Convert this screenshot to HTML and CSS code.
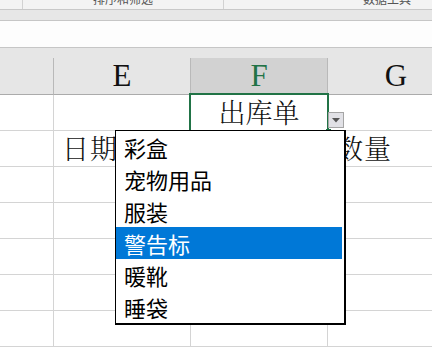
FILE: index.html
```html
<!DOCTYPE html>
<html lang="zh-CN">
<head>
    <meta charset="UTF-8">
    <meta name="viewport" content="width=device-width, initial-scale=1.0">
    <title>出库单</title>
<link rel="stylesheet" href="styles.css">
</head>
<body>
    <div class="ribbon">
        <div class="gruppe g1"><span>排序和筛选</span></div>
        <div class="gruppe g2"><span>数据工具</span></div>
    </div>
    <div class="faneband"></div>
    <div class="formel"></div>

    <section class="ark">
        <div class="topband"></div>
        <div class="gitter">
            <div class="hoved"></div>
            <div class="hoved">E</div>
            <div class="hoved valgt">F</div>
            <div class="hoved">G</div>

            <div class="celle"></div>
            <div class="celle"></div>
            <div class="celle midt">出库单</div>
            <div class="celle"></div>

            <div class="celle"></div>
            <div class="celle venstre">日期</div>
            <div class="celle"></div>
            <div class="celle venstre">数量</div>

            <div class="celle"></div><div class="celle"></div><div class="celle"></div><div class="celle"></div>
            <div class="celle"></div><div class="celle"></div><div class="celle"></div><div class="celle"></div>
            <div class="celle"></div><div class="celle"></div><div class="celle"></div><div class="celle"></div>
            <div class="celle"></div><div class="celle"></div><div class="celle"></div><div class="celle"></div>
            <div class="celle"></div><div class="celle"></div><div class="celle"></div><div class="celle"></div>
        </div>

        <!-- markering af F1 -->
        <div class="markering"><span class="haandtag"></span></div>

        <div class="pil">
            <svg width="8" height="5" viewBox="0 0 8 5"><path d="M0 0 L8 0 L4 4.5 Z" fill="#555"/></svg>
        </div>

        <ul class="liste">
            <li>彩盒</li>
            <li>宠物用品</li>
            <li>服装</li>
            <li class="aktiv">警告标</li>
            <li>暖靴</li>
            <li>睡袋</li>
        </ul>
    </section>
</body>
</html>
```

FILE: styles.css
```css
html {
    overflow: hidden;
}

body {
    margin: 0;
    width: 432px;
    height: 360px;
    overflow: hidden;
    background: #ffffff;
    font-family: "Liberation Sans", "Noto Sans CJK SC", sans-serif;
}

/* ribbon */
.ribbon {
    height: 9px;
    background: #f3f3f3;
    border-bottom: 1px solid #c8c8c8;
    position: relative;
    overflow: hidden;
}

.gruppe {
    position: absolute;
    top: 0;
    height: 9px;
    border-left: 1px solid #d2d2d2;
}
.g1 { left: 22px; width: 200px; }
.g2 { left: 223px; width: 208px; }

.gruppe span {
    position: absolute;
    top: -9px;
    font-family: "Noto Sans CJK SC", sans-serif;
    font-size: 12px;
    line-height: 16px;
    color: #555;
}
.g1 span { left: 70px; }
.g2 span { left: 139px; }

.faneband {
    height: 10px;
    background: #e7e7e7;
    border-bottom: 1px solid #c6c6c6;
}

.formel {
    height: 26px;
    background: #fdfdfd;
    border-bottom: 1px solid #c6c6c6;
}

/* regneark */
.ark {
    position: relative;
    height: 312px;
    overflow: hidden;
}

.topband {
    height: 10px;
    background: #e6e6e6;
}

.gitter {
    display: grid;
    grid-template-columns: 54px 137px 137px 137px;
    grid-auto-rows: 36px;
    grid-template-rows: 37px;
    width: 465px;
}

.hoved {
    background: #e6e6e6;
    border-right: 1px solid #b9b9b9;
    border-bottom: 1px solid #ababab;
    font-family: "Liberation Serif", serif;
    font-size: 31px;
    line-height: 36px;
    text-align: center;
    color: #111;
}
.hoved.valgt {
    background: #d2d2d2;
    color: #217346;
}

.celle {
    border-right: 1px solid #d4d4d4;
    border-bottom: 1px solid #d4d4d4;
    font-family: "Noto Serif CJK SC", "Noto Sans CJK SC", serif;
    font-size: 27px;
    font-weight: 300;
    line-height: 34px;
    color: #111;
    white-space: nowrap;
}
.celle.midt {
    text-align: center;
}
.celle.venstre {
    padding-left: 8px;
    letter-spacing: 1px;
}

.markering {
    position: absolute;
    left: 189px;
    top: 45px;
    width: 136px;
    height: 35px;
    border: 2px solid #217346;
}
.haandtag {
    position: absolute;
    right: -4px;
    bottom: -4px;
    width: 5px;
    height: 5px;
    background: #217346;
}

.pil {
    position: absolute;
    left: 328px;
    top: 64px;
    width: 14px;
    height: 14px;
    border: 1px solid #a5a5a5;
    background: #e1e1e6;
    display: flex;
    align-items: center;
    justify-content: center;
}

.liste {
    position: absolute;
    left: 115px;
    top: 82px;
    width: 226px;
    margin: 0;
    padding: 0 2px 0 0;
    list-style: none;
    background: #ffffff;
    border: 2px solid #000;
    border-top-width: 1px;
    border-left-width: 1px;
}

.liste li {
    height: 32px;
    line-height: 32px;
    padding-left: 8px;
    font-family: "Noto Sans CJK SC", sans-serif;
    font-size: 22px;
    color: #000;
}
.liste li.aktiv {
    background: #0078d7;
    color: #ffffff;
}
```
